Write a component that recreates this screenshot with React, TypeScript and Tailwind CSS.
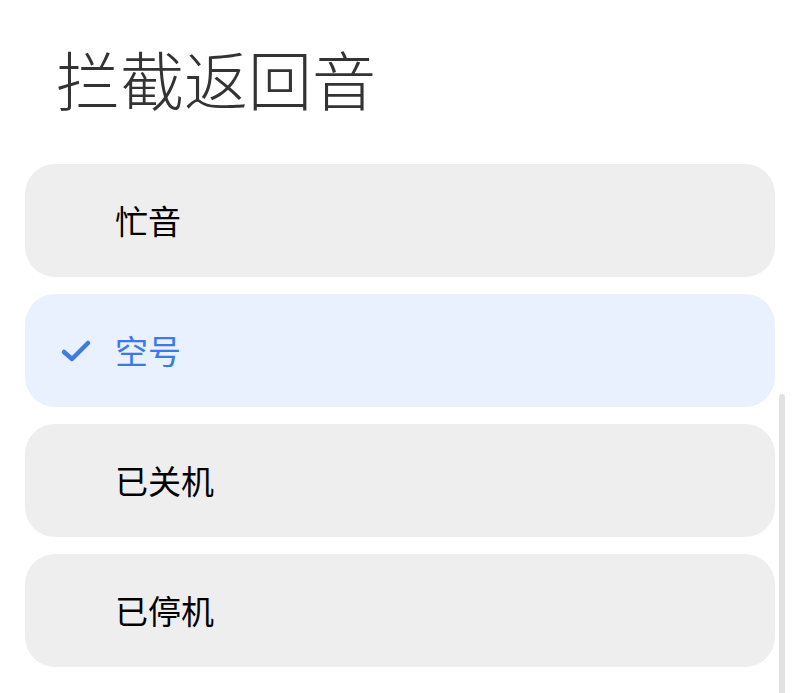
import React from "react";

const items = [
  { label: "忙音", selected: false },
  { label: "空号", selected: true },
  { label: "已关机", selected: false },
  { label: "已停机", selected: false },
];

export default function App() {
  return (
    <div
      className="relative w-[800px] h-[693px] overflow-hidden bg-white"
      style={{ fontFamily: '"Noto Sans CJK SC", "Noto Sans", sans-serif' }}
    >
      <h1 className="pl-[56px] pt-[34px] h-[164px] text-[64px] leading-[86px] font-light text-[#333333]">
        拦截返回音
      </h1>
      <div className="flex flex-col gap-[17px] px-[25px]">
        {items.map((it) => (
          <div
            key={it.label}
            className={
              it.selected
                ? "flex items-center h-[113px] rounded-[30px] bg-[#e8f1fd]"
                : "flex items-center h-[113px] rounded-[30px] bg-[#eeeeee]"
            }
          >
            <div className="w-[90px] flex justify-center pl-[12px]">
              {it.selected && (
                <svg width="32" height="26" viewBox="0 0 32 26">
                  <path
                    d="M4 14 L12 21 L28 5"
                    fill="none"
                    stroke="#3a7be6"
                    strokeWidth="4.5"
                    strokeLinecap="round"
                    strokeLinejoin="round"
                  />
                </svg>
              )}
            </div>
            <span
              className={
                it.selected
                  ? "text-[33px] font-normal text-[#3a7be6]"
                  : "text-[33px] font-normal text-black"
              }
            >
              {it.label}
            </span>
          </div>
        ))}
      </div>
      <div className="absolute left-[779px] top-[394px] w-[6px] h-[310px] rounded-full bg-[#e2e2e2]" />
    </div>
  );
}
